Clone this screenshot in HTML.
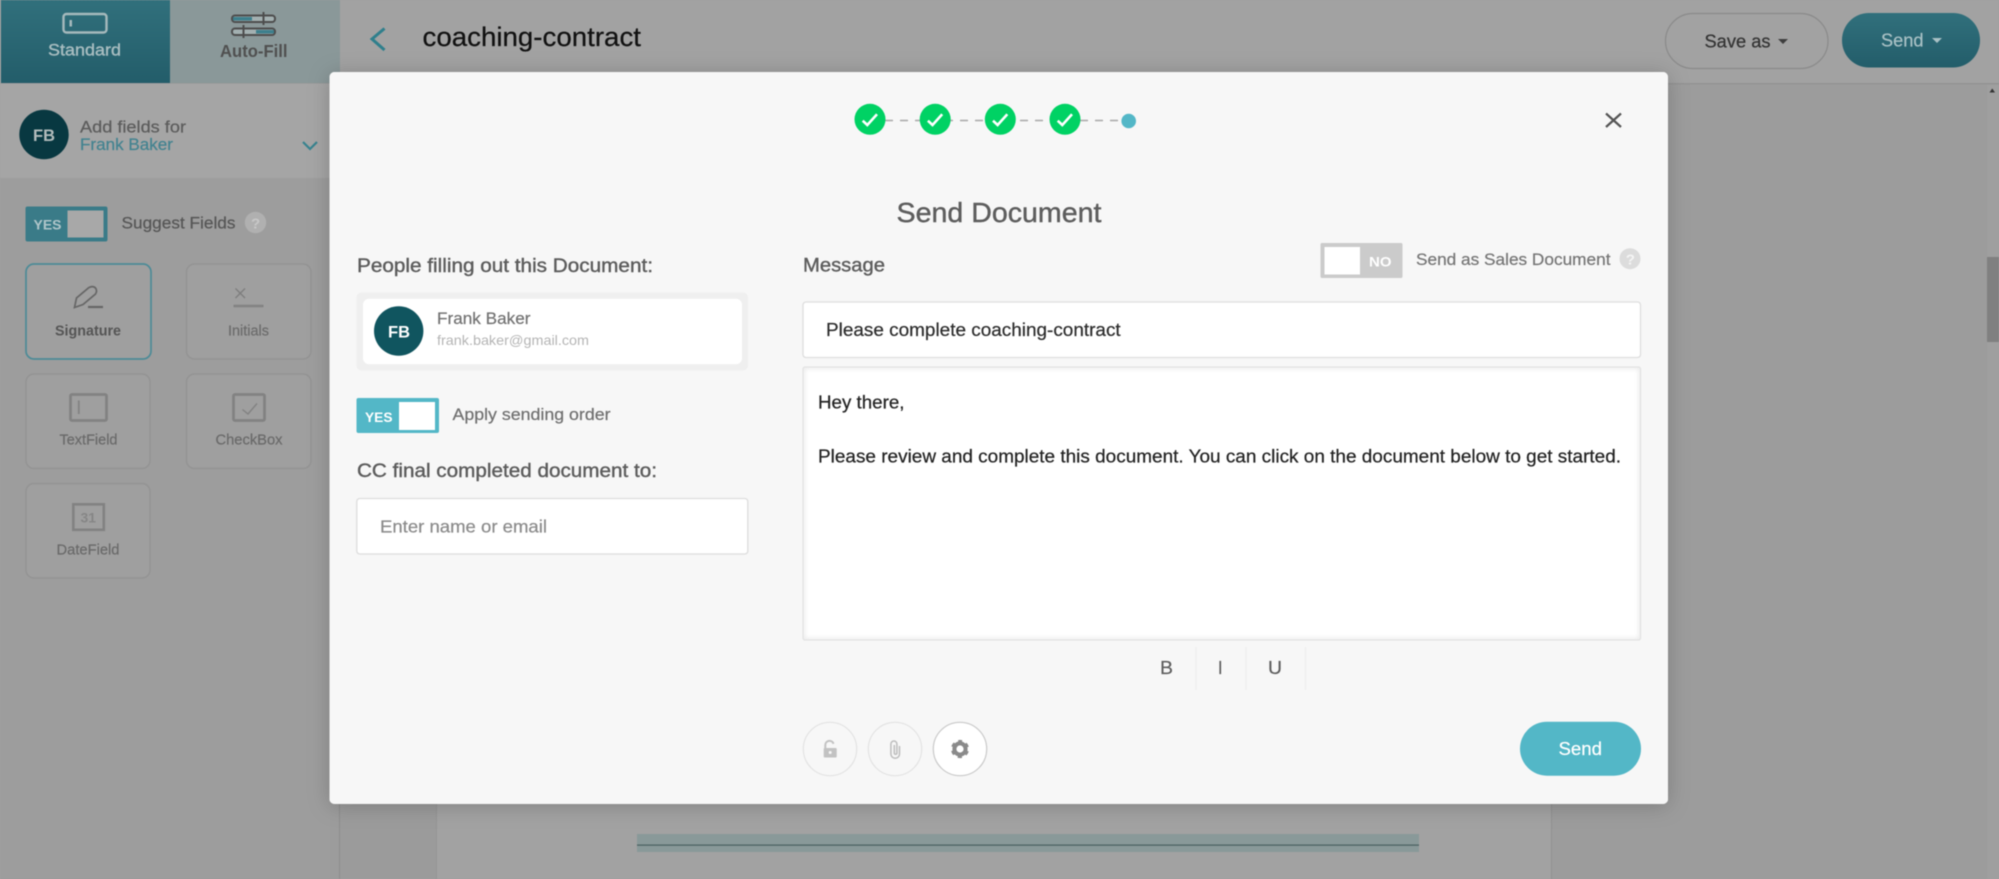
<!DOCTYPE html>
<html lang="en">
<head>
<meta charset="utf-8">
<title>Send Document</title>
<style>
html,body{margin:0;padding:0;width:1999px;height:879px;overflow:hidden;background:#a0a0a0}
svg{display:block;position:absolute;left:0;top:0;filter:blur(.45px)}
text{font-family:"Liberation Sans",sans-serif;font-size:18px}
.m{stroke-width:.4px}
.s{stroke-width:.22px}
</style>
</head>
<body>
<svg xmlns="http://www.w3.org/2000/svg" width="1999" height="879" viewBox="0 0 1999 879">
<defs>
<linearGradient id="teal" x1="0" y1="0" x2="0" y2="1"><stop offset="0" stop-color="#31707c"/><stop offset="1" stop-color="#235d6a"/></linearGradient>
<filter id="ms" x="-10%" y="-10%" width="120%" height="120%"><feDropShadow dx="0" dy="2" stdDeviation="11" flood-color="#000" flood-opacity=".2"/></filter>
<filter id="ins" x="-2%" y="-5%" width="104%" height="110%"><feGaussianBlur stdDeviation="2.5"/></filter>
<clipPath id="bodyclip"><rect x="803" y="367" width="838" height="273" rx="3"/></clipPath>
</defs>

<!-- Backdrop -->
<rect width="1999" height="879" fill="#9c9c9c"/>
<rect x="340" y="84" width="97" height="795" fill="#9b9b9b"/>
<rect x="437" y="84" width="1114" height="795" fill="#a2a2a2"/>
<rect x="1551" y="84" width="448" height="795" fill="#9c9c9c"/>
<rect x="436" y="84" width="1" height="795" fill="#959595"/>
<rect x="1551" y="84" width="1" height="795" fill="#919191"/>
<rect x="339" y="84" width="1" height="795" fill="#8d8d8d"/>
<rect x="637" y="834" width="782" height="18" fill="#899999"/>
<rect x="637" y="844.5" width="782" height="1.2" fill="#4a5f5f"/>

<!-- Right scrollbar -->
<rect x="1987" y="84" width="12" height="795" fill="#9f9f9f"/>
<rect x="1987" y="257" width="12" height="85" fill="#808080"/>
<path d="M1989.5 92.5h5.5l-2.75-4z" fill="#333"/>

<!-- Top bar -->
<rect width="1999" height="83" fill="#a2a2a2"/>
<rect y="83" width="1999" height="1.5" fill="#939393"/>
<path d="M384.5 28.5 L372 39 L384.5 50" fill="none" stroke="#2f7f8c" stroke-width="3"/>
<text class="s" x="422.5" y="46" style="font-size:27px" fill="#111" stroke="#111" textLength="218.5" lengthAdjust="spacingAndGlyphs">coaching-contract</text>

<rect x="1665.5" y="13.5" width="162.5" height="55" rx="27.5" fill="#a2a2a2" stroke="#8a8a8a" stroke-width="1.2"/>
<text class="s" x="1704.5" y="47.5" fill="#333" stroke="#333" textLength="66" lengthAdjust="spacingAndGlyphs">Save as</text>
<path d="M1778 39h10l-5 5z" fill="#3e3e3e"/>
<rect x="1842" y="13" width="138" height="54.5" rx="27" fill="url(#teal)"/>
<text class="s" x="1881" y="46.5" fill="#a9c1c5" stroke="#a9c1c5" textLength="42.5" lengthAdjust="spacingAndGlyphs">Send</text>
<path d="M1932 38h10l-5 5z" fill="#a9c1c5"/>

<!-- Left tabs -->
<rect x="1" y="0" width="169" height="83" fill="url(#teal)"/>
<rect x="170" y="0" width="170" height="83" fill="#8a9899"/>
<rect x="63.5" y="14" width="43" height="18.5" rx="3" fill="none" stroke="#a5b9bc" stroke-width="2.4"/>
<rect x="69.5" y="20" width="2.5" height="6.5" fill="#a5b9bc"/>
<text class="m" x="48" y="55.5" style="font-size:17px" fill="#a8bdc0" stroke="#a8bdc0" textLength="73" lengthAdjust="spacingAndGlyphs">Standard</text>
<rect x="232" y="15.5" width="43" height="6.5" rx="3" fill="#a3b0b1" stroke="#4d4d4d" stroke-width="2"/>
<rect x="232" y="28.5" width="43" height="6.5" rx="3" fill="#a3b0b1" stroke="#4d4d4d" stroke-width="2"/>
<rect x="233" y="17" width="19" height="3.5" fill="#3d7f8c"/>
<rect x="256" y="30" width="18" height="3.5" fill="#3d7f8c"/>
<path d="M263.5 12V25M243.5 25V38" stroke="#4d4d4d" stroke-width="2"/>
<text x="220" y="57" style="font-size:17.5px;font-weight:bold" fill="#505050" textLength="67.5" lengthAdjust="spacingAndGlyphs">Auto-Fill</text>

<!-- Sidebar header -->
<rect y="83.5" width="330" height="95" fill="#a5a5a5"/>
<rect y="178" width="330" height="700" fill="#9d9d9d"/>
<circle cx="44" cy="134.5" r="24.7" fill="#083841"/>
<text x="33" y="141" style="font-size:17px;font-weight:bold" fill="#b2bcbc" textLength="22" lengthAdjust="spacingAndGlyphs">FB</text>
<text class="s" x="80" y="132.5" style="font-size:16.5px" fill="#5c5c5c" stroke="#5c5c5c" textLength="106" lengthAdjust="spacingAndGlyphs">Add fields for</text>
<text class="s" x="80" y="150" style="font-size:16.5px" fill="#438390" stroke="#438390" textLength="93" lengthAdjust="spacingAndGlyphs">Frank Baker</text>
<path d="M303 142 L310 149 L317 142" fill="none" stroke="#37838f" stroke-width="2.2"/>

<rect x="25.5" y="206.5" width="82" height="35" rx="2" fill="#3a7b88"/>
<rect x="67.5" y="210.5" width="36" height="27" fill="#a8a8a8"/>
<text x="33.5" y="229.5" style="font-size:14px;font-weight:bold" fill="#b0c6ca" textLength="28" lengthAdjust="spacingAndGlyphs">YES</text>
<text class="s" x="121.5" y="228.5" style="font-size:16.5px" fill="#565656" stroke="#565656" textLength="114" lengthAdjust="spacingAndGlyphs">Suggest Fields</text>
<circle cx="255.5" cy="222.5" r="10.7" fill="#b0b0b0"/>
<text x="251" y="228.5" style="font-size:15px;font-weight:bold" fill="#c8c8c8">?</text>

<!-- Field cards -->
<rect x="26" y="264" width="125" height="95" rx="8" fill="#9f9f9f" stroke="#4c8b97" stroke-width="1.7"/>
<rect x="186.5" y="264" width="124.5" height="95" rx="8" fill="#9f9f9f" stroke="#939393" stroke-width="1.4"/>
<rect x="26" y="374" width="124" height="94.5" rx="8" fill="#9f9f9f" stroke="#939393" stroke-width="1.4"/>
<rect x="186.5" y="374" width="124.5" height="94.5" rx="8" fill="#9f9f9f" stroke="#939393" stroke-width="1.4"/>
<rect x="26" y="483.5" width="124" height="94.5" rx="8" fill="#9f9f9f" stroke="#939393" stroke-width="1.4"/>

<path d="M74.5 307.5 L76.5 298 L89 287.5 Q93 285.5 95.5 288 Q97.5 291 95.5 294 L83 304.5 Z" fill="none" stroke="#666" stroke-width="1.7"/>
<path d="M88 307H103" stroke="#666" stroke-width="2.2"/>
<text x="55" y="335.5" style="font-size:15px;font-weight:bold" fill="#555" textLength="66" lengthAdjust="spacingAndGlyphs">Signature</text>

<path d="M235.5 288.5l9.5 9.5M245 288.5l-9.5 9.5" stroke="#7d7d7d" stroke-width="1.3"/>
<path d="M233.5 306H263.5" stroke="#828282" stroke-width="2.4"/>
<text class="s" x="228" y="335.5" style="font-size:15px" fill="#6c6c6c" stroke="#6c6c6c" textLength="41" lengthAdjust="spacingAndGlyphs">Initials</text>

<rect x="70.5" y="394.5" width="36" height="26" rx="1.5" fill="none" stroke="#828282" stroke-width="2.8"/>
<path d="M78.8 400.5V414" stroke="#828282" stroke-width="1.8"/>
<text class="s" x="59.5" y="444.5" style="font-size:15px" fill="#6a6a6a" stroke="#6a6a6a" textLength="58" lengthAdjust="spacingAndGlyphs">TextField</text>

<rect x="233.5" y="394.5" width="31" height="26" rx="1.5" fill="none" stroke="#828282" stroke-width="2.8"/>
<path d="M242.5 409.5 L248 414 L257 403.5" fill="none" stroke="#828282" stroke-width="1.4"/>
<text class="s" x="215.5" y="444.5" style="font-size:15px" fill="#6a6a6a" stroke="#6a6a6a" textLength="67" lengthAdjust="spacingAndGlyphs">CheckBox</text>

<rect x="73.3" y="504.3" width="30.5" height="25.5" fill="none" stroke="#828282" stroke-width="2.6"/>
<text x="80.5" y="522.5" style="font-size:13.5px;font-weight:bold" fill="#868686" textLength="15.5" lengthAdjust="spacingAndGlyphs">31</text>
<text class="s" x="56.5" y="554.5" style="font-size:15px" fill="#6a6a6a" stroke="#6a6a6a" textLength="63" lengthAdjust="spacingAndGlyphs">DateField</text>

<!-- Modal -->
<rect x="329.5" y="72" width="1338.5" height="732" rx="5" fill="#f7f7f7" filter="url(#ms)"/>
<rect x="329.5" y="72" width="1338.5" height="732" rx="5" fill="#f7f7f7"/>

<!-- Stepper -->
<path d="M885 120.5H1128" stroke="#a8a8a8" stroke-width="1.4" stroke-dasharray="8 7"/>
<g fill="#00d264">
<circle cx="870" cy="119.3" r="15.5"/><circle cx="935.2" cy="119.3" r="15.5"/><circle cx="1000.3" cy="119.3" r="15.5"/><circle cx="1065" cy="119.3" r="15.5"/>
</g>
<g fill="none" stroke="#fff" stroke-width="2.6">
<path d="M862.7 120.7L867.3 125L877 114.3"/><path d="M927.9 120.7L932.5 125L942.2 114.3"/><path d="M993 120.7L997.6 125L1007.3 114.3"/><path d="M1057.7 120.7L1062.3 125L1072 114.3"/>
</g>
<circle cx="1128.7" cy="121" r="7.3" fill="#53b7c7"/>

<!-- Close -->
<path d="M1606 113.5 L1621 127 M1621 113.5 L1606 127" stroke="#555" stroke-width="2.2"/>

<text class="m" x="896.5" y="222" style="font-size:28px" fill="#5d5d5d" stroke="#5d5d5d" textLength="205" lengthAdjust="spacingAndGlyphs">Send Document</text>

<!-- Left column -->
<text class="m" x="357" y="272" style="font-size:19.5px" fill="#5c5c5c" stroke="#5c5c5c" textLength="296" lengthAdjust="spacingAndGlyphs">People filling out this Document:</text>
<rect x="356.5" y="292.5" width="391.5" height="78" rx="5" fill="#efefef"/>
<rect x="363" y="298.7" width="379" height="65.5" rx="6" fill="#fff"/>
<circle cx="398.7" cy="331" r="24.7" fill="#10555f"/>
<text x="388" y="337.5" style="font-size:17px;font-weight:bold" fill="#fff" textLength="22" lengthAdjust="spacingAndGlyphs">FB</text>
<text class="s" x="437" y="324" style="font-size:17px" fill="#737373" stroke="#737373" textLength="93.5" lengthAdjust="spacingAndGlyphs">Frank Baker</text>
<text x="437" y="345" style="font-size:14px" fill="#b5b5b5" textLength="152" lengthAdjust="spacingAndGlyphs">frank.baker@gmail.com</text>

<rect x="356.5" y="398" width="82.5" height="35" rx="2" fill="#53b7c7"/>
<rect x="399" y="402" width="36" height="28" fill="#fff"/>
<text x="365" y="422" style="font-size:14px;font-weight:bold" fill="#fff" textLength="27.5" lengthAdjust="spacingAndGlyphs">YES</text>
<text class="s" x="452.5" y="420" style="font-size:17px" fill="#707070" stroke="#707070" textLength="158" lengthAdjust="spacingAndGlyphs">Apply sending order</text>
<text class="m" x="357" y="477" style="font-size:19.5px" fill="#5c5c5c" stroke="#5c5c5c" textLength="300" lengthAdjust="spacingAndGlyphs">CC final completed document to:</text>
<rect x="356.8" y="498.5" width="391" height="55.5" rx="3" fill="#fff" stroke="#dddddd" stroke-width="1.3"/>
<text class="s" x="380" y="532.5" style="font-size:17.5px" fill="#8b8b8b" stroke="#8b8b8b" textLength="167" lengthAdjust="spacingAndGlyphs">Enter name or email</text>

<!-- Right column -->
<text class="m" x="803" y="271.5" style="font-size:19.5px" fill="#5c5c5c" stroke="#5c5c5c" textLength="82" lengthAdjust="spacingAndGlyphs">Message</text>
<rect x="1320.5" y="243" width="82" height="35" rx="1.5" fill="#cbcbcb"/>
<rect x="1324.5" y="247" width="35.5" height="27.5" fill="#fff"/>
<text x="1369" y="266.5" style="font-size:14px;font-weight:bold" fill="#fff" textLength="22.5" lengthAdjust="spacingAndGlyphs">NO</text>
<text class="s" x="1416" y="265" style="font-size:16.5px" fill="#767676" stroke="#767676" textLength="194.5" lengthAdjust="spacingAndGlyphs">Send as Sales Document</text>
<circle cx="1630" cy="258.7" r="10.5" fill="#dcdcdc"/>
<text x="1625.8" y="264.5" style="font-size:15px;font-weight:bold" fill="#f5f5f5">?</text>

<rect x="803" y="302" width="837.5" height="55.5" rx="3" fill="#fff" stroke="#dedede" stroke-width="1.3"/>
<text class="s" x="826" y="336" fill="#2c2c2c" stroke="#2c2c2c" textLength="294.7" lengthAdjust="spacingAndGlyphs">Please complete coaching-contract</text>

<rect x="803" y="367" width="837.5" height="273" rx="2" fill="#fff"/>
<g clip-path="url(#bodyclip)"><rect x="803" y="367" width="837.5" height="273" fill="none" stroke="#000" stroke-opacity=".1" stroke-width="3" filter="url(#ins)"/></g>
<rect x="803" y="367" width="837.5" height="273" rx="2" fill="none" stroke="#e2e2e2" stroke-width="1.2"/>
<text class="s" x="818" y="408.5" fill="#222" stroke="#222" textLength="86.5" lengthAdjust="spacingAndGlyphs">Hey there,</text>
<text class="s" x="818" y="462.7" fill="#222" stroke="#222" textLength="803" lengthAdjust="spacingAndGlyphs">Please review and complete this document. You can click on the document below to get started.</text>

<!-- Format toolbar -->
<text class="s" x="1160" y="674" style="font-size:18px" fill="#5d5d5d" stroke="#5d5d5d" textLength="13" lengthAdjust="spacingAndGlyphs">B</text>
<text class="s" x="1218" y="674" style="font-size:18px" fill="#5d5d5d" stroke="#5d5d5d" textLength="4.5" lengthAdjust="spacingAndGlyphs">I</text>
<text class="s" x="1268" y="674" style="font-size:18px" fill="#5d5d5d" stroke="#5d5d5d" textLength="14" lengthAdjust="spacingAndGlyphs">U</text>
<path d="M1196 647V690M1246 647V690M1305.5 647V690" stroke="#eeeeee" stroke-width="1.2"/>

<!-- Bottom round buttons -->
<circle cx="830" cy="749" r="26.7" fill="#f7f7f7" stroke="#e3e3e3" stroke-width="1.2"/>
<circle cx="895" cy="749" r="26.7" fill="#f7f7f7" stroke="#e3e3e3" stroke-width="1.2"/>
<circle cx="960" cy="749" r="26.7" fill="#fff" stroke="#c9c9c9" stroke-width="1.2"/>
<rect x="823.7" y="748" width="13" height="9.5" rx="1" fill="#c2c2c2"/>
<circle cx="830.2" cy="752.5" r="1.5" fill="#f7f7f7"/>
<path d="M825.3 748V745a4.2 4.2 0 0 1 8.2 -1.2" fill="none" stroke="#c2c2c2" stroke-width="2"/>
<path d="M899.5 746V754a4.3 4.3 0 0 1 -8.6 0V744a3 3 0 0 1 6 0V753a1.2 1.2 0 0 1 -2.6 0V745" fill="none" stroke="#bdbdbd" stroke-width="1.5"/>
<circle cx="960" cy="749" r="5.6" fill="none" stroke="#8a8a8a" stroke-width="4"/>
<circle cx="960" cy="749" r="8" fill="none" stroke="#8a8a8a" stroke-width="2.2" stroke-dasharray="4.2 4.18" stroke-dashoffset="2.1" transform="rotate(-90 960 749)"/>

<!-- Send -->
<rect x="1520" y="721.7" width="121" height="54" rx="27" fill="#53b7c7"/>
<text class="s" x="1558.5" y="755" style="font-size:18px" fill="#fff" stroke="#fff" textLength="43.5" lengthAdjust="spacingAndGlyphs">Send</text>
</svg>
</body>
</html>
